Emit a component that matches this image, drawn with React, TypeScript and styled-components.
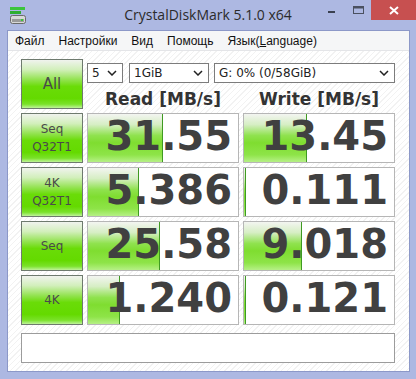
import React from "react";
import styled, { createGlobalStyle } from "styled-components";

const GlobalStyle = createGlobalStyle`
  html, body { margin: 0; padding: 0; }
  body { width: 416px; height: 379px; overflow: hidden; background: #adb8e2; }
`;

const Window = styled.div`
  width: 416px;
  height: 379px;
  background: #adb8e2;
  display: flex;
  flex-direction: column;
  box-sizing: border-box;
  padding: 0 6px 7px 7px;
`;

const TitleBar = styled.div`
  height: 30px;
  display: flex;
  align-items: flex-start;
  position: relative;
  flex-shrink: 0;
`;

const AppIcon = styled.svg`
  margin: 7px 0 0 3px;
`;

const Title = styled.div`
  position: absolute;
  left: -7px;
  right: -6px;
  top: 5px;
  text-align: center;
  font: 14px "Open Sans", "Noto Sans", sans-serif;
  color: #2b2b2b;
  pointer-events: none;
`;

const WinButtons = styled.div`
  margin-left: auto;
  margin-right: -6px;
  display: flex;
  align-items: flex-start;
`;

const WinButton = styled.div<{ $close?: boolean }>`
  width: ${(p) => (p.$close ? "45px" : "26px")};
  height: 20px;
  display: flex;
  align-items: center;
  justify-content: center;
  background: ${(p) => (p.$close ? "#c75050" : "transparent")};
`;

const Frame = styled.div`
  flex: 1;
  display: flex;
  flex-direction: column;
  border: 1px solid #8c98c8;
  background: #fff;
`;

const MenuBar = styled.div`
  height: 19px;
  background: #f5f6f7;
  border-bottom: 1px solid #e4e5e8;
  display: flex;
  align-items: center;
  padding-left: 7px;
  gap: 14px;
  font: 12px "Liberation Sans", Arial, sans-serif;
  color: #111;
`;

const MenuItem = styled.span`
  u { text-decoration: underline; }
`;

const Content = styled.div`
  flex: 1;
  padding: 8px 0 0 13px;
  background: repeating-linear-gradient(135deg, #ffffff 0 3px, #f2f2f2 3px 4px);
`;

const Grid = styled.div`
  display: grid;
  grid-template-columns: 62px 152px 152px;
  grid-auto-rows: 50px;
  column-gap: 4px;
  row-gap: 4px;
`;

const TestButton = styled.div<{ $big?: boolean }>`
  box-sizing: border-box;
  border: 1px solid #6e7a6e;
  background: linear-gradient(
    to bottom,
    #f0f3ee 0%,
    #d2efbb 20%,
    #8fe24a 42%,
    #6adc08 55%,
    #64da00 80%,
    #7ae22a 92%,
    #bff39a 100%
  );
  display: flex;
  flex-direction: column;
  align-items: center;
  justify-content: center;
  font: ${(p) => (p.$big ? "15px" : "12px")} "DejaVu Sans", Verdana, sans-serif;
  line-height: 18px;
  color: #4a4a4a;
`;

const Controls = styled.div`
  grid-column: 2 / span 2;
  display: flex;
  flex-direction: column;
  padding-top: 4px;
`;

const SelectRow = styled.div`
  display: flex;
  gap: 6px;
`;

const FakeSelect = styled.div<{ $w: number }>`
  box-sizing: border-box;
  width: ${(p) => p.$w}px;
  height: 20px;
  border: 1px solid #7c7c7c;
  background: #fff;
  display: flex;
  align-items: center;
  justify-content: space-between;
  padding: 0 5px 0 4px;
  font: 12px "DejaVu Sans", Tahoma, sans-serif;
  color: #222;
`;

const Headers = styled.div`
  display: grid;
  grid-template-columns: 152px 152px;
  column-gap: 4px;
  margin-top: 6px;
`;

const Header = styled.div`
  text-align: center;
  font: bold 17px "DejaVu Sans", Verdana, sans-serif;
  color: #333;
  line-height: 20px;
`;

const Cell = styled.div`
  position: relative;
  box-sizing: border-box;
  border: 1px solid #b6b6b6;
  background: #fff;
  display: flex;
  align-items: center;
  justify-content: flex-end;
  padding: 0 6px 4px 0;
  overflow: hidden;
`;

const Bar = styled.div`
  position: absolute;
  left: 0;
  top: 0;
  bottom: 0;
  box-sizing: border-box;
  border-right: 1px solid #3f9a22;
  background: linear-gradient(
    to bottom,
    #f3f5f1 0%,
    #d6eec4 22%,
    #8fe24e 45%,
    #7fdd30 60%,
    #8ee448 85%,
    #b6f086 100%
  );
`;

const Value = styled.span`
  position: relative;
  font: bold 40px "DejaVu Sans", Verdana, sans-serif;
  color: #404040;
`;

const Comment = styled.div`
  box-sizing: border-box;
  width: 374px;
  height: 30px;
  margin-top: 8px;
  border: 1px solid #9c9c9c;
  background: #fff;
`;

const Chevron = () => (
  <svg width="10" height="6" viewBox="0 0 10 6">
    <path d="M1 1 L5 5 L9 1" fill="none" stroke="#222" strokeWidth="1.5" />
  </svg>
);

const rows = [
  { label: ["Seq", "Q32T1"], read: "31.55", rw: 75, write: "13.45", ww: 63 },
  { label: ["4K", "Q32T1"], read: "5.386", rw: 51, write: "0.111", ww: 2 },
  { label: ["Seq"], read: "25.58", rw: 72, write: "9.018", ww: 58 },
  { label: ["4K"], read: "1.240", rw: 32, write: "0.121", ww: 2 },
];

export default function App() {
  return (
    <>
      <GlobalStyle />
      <Window>
        <TitleBar>
          <AppIcon width="16" height="17" viewBox="0 0 16 17">
            <rect x="0" y="0" width="15" height="3" fill="#3cc43c" />
            <rect x="0" y="4" width="11" height="3" fill="#2fae2f" />
            <rect x="0.5" y="8.5" width="15" height="8" rx="2" fill="#d8d8d8" stroke="#6a6a6a" />
            <rect x="2" y="12" width="12" height="3" fill="#9a9a9a" />
            <rect x="11" y="12" width="2" height="2" fill="#37c837" />
          </AppIcon>
          <Title>CrystalDiskMark 5.1.0 x64</Title>
          <WinButtons>
            <WinButton>
              <svg width="8" height="8" viewBox="0 0 8 8">
                <rect x="0" y="5" width="7" height="2" fill="#3a4050" />
              </svg>
            </WinButton>
            <WinButton>
              <svg width="11" height="9" viewBox="0 0 11 9">
                <rect x="0.5" y="0.5" width="10" height="7" fill="none" stroke="#4a5060" />
                <rect x="0.5" y="0.5" width="10" height="2" fill="#4a5060" />
              </svg>
            </WinButton>
            <WinButton $close>
              <svg width="10" height="9" viewBox="0 0 10 9">
                <path d="M1 1 L9 8 M9 1 L1 8" stroke="#fff" strokeWidth="2" />
              </svg>
            </WinButton>
          </WinButtons>
        </TitleBar>
        <Frame>
          <MenuBar>
            <MenuItem>Файл</MenuItem>
            <MenuItem>Настройки</MenuItem>
            <MenuItem>Вид</MenuItem>
            <MenuItem>Помощь</MenuItem>
            <MenuItem>
              Язык(<u>L</u>anguage)
            </MenuItem>
          </MenuBar>
          <Content>
            <Grid>
              <TestButton $big>All</TestButton>
              <Controls>
                <SelectRow>
                  <FakeSelect $w={36}>
                    5<Chevron />
                  </FakeSelect>
                  <FakeSelect $w={80}>
                    1GiB<Chevron />
                  </FakeSelect>
                  <FakeSelect $w={181} style={{ marginLeft: -1 }}>
                    G: 0% (0/58GiB)<Chevron />
                  </FakeSelect>
                </SelectRow>
                <Headers>
                  <Header>Read [MB/s]</Header>
                  <Header>Write [MB/s]</Header>
                </Headers>
              </Controls>
              {rows.map((r) => (
                <React.Fragment key={r.read}>
                  <TestButton>
                    {r.label.map((l) => (
                      <span key={l}>{l}</span>
                    ))}
                  </TestButton>
                  <Cell>
                    <Bar style={{ width: r.rw }} />
                    <Value>{r.read}</Value>
                  </Cell>
                  <Cell>
                    <Bar style={{ width: r.ww }} />
                    <Value>{r.write}</Value>
                  </Cell>
                </React.Fragment>
              ))}
            </Grid>
            <Comment />
          </Content>
        </Frame>
      </Window>
    </>
  );
}
